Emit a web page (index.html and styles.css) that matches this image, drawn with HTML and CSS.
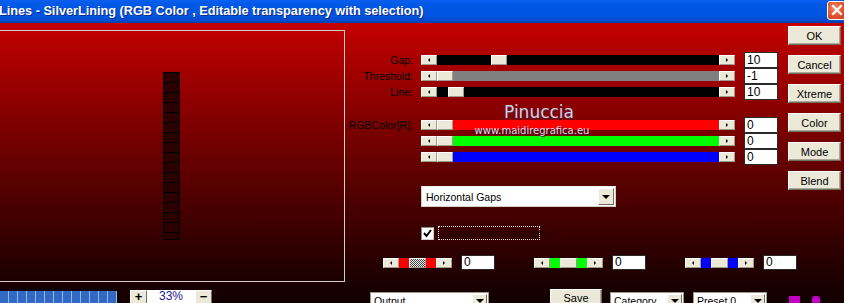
FILE: index.html
```html
<!DOCTYPE html>
<html lang="en">
<head>
    <meta charset="UTF-8">
    <title>Lines - SilverLining</title>
    <link rel="stylesheet" href="styles.css">
</head>
<body>
<div class="window">
    <div class="titlebar">
        <span class="title">Lines - SilverLining (RGB Color , Editable transparency with selection)</span>
        <span class="close">
            <svg width="12" height="12" viewBox="0 0 12 12"><path d="M2 2 L10 10 M10 2 L2 10" stroke="#fff" stroke-width="2.2" stroke-linecap="square"/></svg>
        </span>
    </div>

    <div class="client">
        <div class="main">
            <div class="preview">
                <div class="ladder"></div>
            </div>

            <div class="controls">
                <div class="row">
                    <span class="lbl">Gap:</span>
                    <div class="slider">
                        <span class="arrow left"></span>
                        <span class="track black"><span class="thumb" style="margin-left: 54px"></span></span>
                        <span class="arrow right"></span>
                    </div>
                    <span class="value">10</span>
                </div>
                <div class="row">
                    <span class="lbl">Threshold:</span>
                    <div class="slider">
                        <span class="arrow left"></span>
                        <span class="track gray"><span class="thumb"></span></span>
                        <span class="arrow right"></span>
                    </div>
                    <span class="value">-1</span>
                </div>
                <div class="row">
                    <span class="lbl">Line:</span>
                    <div class="slider">
                        <span class="arrow left"></span>
                        <span class="track black"><span class="thumb" style="margin-left: 11px"></span></span>
                        <span class="arrow right"></span>
                    </div>
                    <span class="value">10</span>
                </div>

                <div class="rgb">
                    <div class="row">
                        <span class="lbl">RGBColor[R]:</span>
                        <div class="slider">
                            <span class="arrow left"></span>
                            <span class="track red"><span class="thumb"></span></span>
                            <span class="arrow right"></span>
                        </div>
                        <span class="value">0</span>
                    </div>
                    <div class="row">
                        <span class="lbl"></span>
                        <div class="slider">
                            <span class="arrow left"></span>
                            <span class="track green"><span class="thumb"></span></span>
                            <span class="arrow right"></span>
                        </div>
                        <span class="value">0</span>
                    </div>
                    <div class="row">
                        <span class="lbl"></span>
                        <div class="slider">
                            <span class="arrow left"></span>
                            <span class="track blue"><span class="thumb"></span></span>
                            <span class="arrow right"></span>
                        </div>
                        <span class="value">0</span>
                    </div>
                    <div class="watermark">
                        <div class="wm-name">Pinuccia</div>
                        <div class="wm-url">www.maidiregrafica.eu</div>
                    </div>
                </div>

                <div class="combo">
                    <span class="combo-text">Horizontal Gaps</span>
                    <span class="drop"></span>
                </div>

                <div class="check">
                    <span class="box">
                        <svg width="11" height="11" viewBox="0 0 11 11"><path d="M2 5 L4.5 8 L9 2" fill="none" stroke="#000" stroke-width="2"/></svg>
                    </span>
                    <span class="check-label">Create lines, not gaps</span>
                </div>

                <div class="minis">
                    <div class="mini">
                        <span class="arrow left"></span>
                        <span class="chip red"></span>
                        <span class="mthumb dither"></span>
                        <span class="chip red"></span>
                        <span class="arrow right"></span>
                    </div>
                    <span class="value">0</span>
                    <div class="mini">
                        <span class="arrow left"></span>
                        <span class="chip green"></span>
                        <span class="mthumb"></span>
                        <span class="chip green"></span>
                        <span class="arrow right"></span>
                    </div>
                    <span class="value">0</span>
                    <div class="mini">
                        <span class="arrow left"></span>
                        <span class="chip blue"></span>
                        <span class="mthumb"></span>
                        <span class="chip blue"></span>
                        <span class="arrow right"></span>
                    </div>
                    <span class="value">0</span>
                </div>
            </div>

            <div class="buttons">
                <button>OK</button>
                <button>Cancel</button>
                <button>Xtreme</button>
                <button>Color</button>
                <button>Mode</button>
                <button>Blend</button>
            </div>
        </div>

        <div class="footer">
            <div class="progress"></div>
            <span class="zbtn plus">+</span>
            <span class="zoom">33%</span>
            <span class="zbtn">&minus;</span>
            <div class="combo small output"><span class="combo-text">Output</span><span class="drop"></span></div>
            <button class="save">Save</button>
            <div class="combo small category"><span class="combo-text">Category</span><span class="drop"></span></div>
            <div class="combo small preset"><span class="combo-text">Preset 0</span><span class="drop"></span></div>
            <span class="logo"><span class="sq"></span><span class="dot"></span></span>
        </div>
    </div>
</div>
</body>
</html>
```

FILE: styles.css
```css
body {
    margin: 0;
    padding: 0;
    font-family: "Liberation Sans", Arial, sans-serif;
    background-color: #100000;
}

.window {
    width: 844px;
    height: 303px;
    overflow: hidden;
}

/* title bar */
.titlebar {
    height: 23px;
    display: flex;
    align-items: center;
    justify-content: space-between;
    background: linear-gradient(#0a5ff0, #0058e6 20%, #0054e0 70%, #0049c8 92%, #003ca8);
}

.title {
    color: #fff;
    font-weight: bold;
    font-size: 12.7px;
    margin-left: -1px;
    margin-top: -2px;
    text-shadow: 1px 1px 0 #0a2a8a;
    white-space: nowrap;
}

.close {
    width: 19px;
    height: 19px;
    margin-top: -3px;
    margin-right: -2px;
    box-sizing: border-box;
    border: 1px solid #fff;
    border-radius: 3px;
    background: radial-gradient(circle at 40% 35%, #f08a6a, #e0532f 55%, #c83a18);
    display: flex;
    align-items: center;
    justify-content: center;
}

/* client area */
.client {
    height: 280px;
    background: linear-gradient(#c40000, #8a0000 30%, #4a0000 65%, #1e0000 90%, #120000);
}

.main {
    height: 266px;
    display: flex;
}

.preview {
    width: 344px;
    height: 250px;
    margin-top: 7px;
    border: 1px solid #d4d0c8;
    border-left: none;
    flex-shrink: 0;
}

.ladder {
    width: 15px;
    height: 166px;
    margin-left: 163px;
    margin-top: 41px;
    border: 1px solid #000;
    background-color: #2a0000;
    background-image: repeating-linear-gradient(#2a0000 0 9px, #000 9px 10px);
}

/* sliders */
.controls {
    width: 433px;
    padding-top: 29px;
    flex-shrink: 0;
    position: relative;
}

.row {
    display: flex;
    align-items: center;
    height: 16px;
}

.lbl {
    width: 68px;
    margin-right: 8px;
    text-align: right;
    font-size: 10.5px;
    color: #000;
    white-space: nowrap;
}

.slider {
    width: 314px;
    height: 10px;
    display: flex;
    margin-right: 9px;
}

.arrow {
    width: 16px;
    height: 10px;
    box-sizing: border-box;
    background-color: #ece9d8;
    border-top: 1px solid #fff;
    border-left: 1px solid #fff;
    border-right: 1px solid #9d9a8c;
    border-bottom: 1px solid #9d9a8c;
    display: flex;
    align-items: center;
    justify-content: center;
    flex-shrink: 0;
}

.arrow::after {
    content: '';
    width: 0;
    height: 0;
    border-top: 2px solid transparent;
    border-bottom: 2px solid transparent;
}

.arrow.left::after {
    border-right: 2px solid #000;
}

.arrow.right::after {
    border-left: 2px solid #000;
}

.track {
    flex: 1;
    display: flex;
}

.thumb {
    width: 16px;
    height: 10px;
    box-sizing: border-box;
    background-color: #ece9d8;
    border-top: 1px solid #fff;
    border-left: 1px solid #fff;
    border-right: 1px solid #9d9a8c;
    border-bottom: 1px solid #9d9a8c;
}

.black { background-color: #000; }
.gray { background-color: #808080; }
.red { background-color: #ff0000; }
.green { background-color: #00ff00; }
.blue { background-color: #0000ff; }

.value {
    width: 34px;
    height: 16px;
    box-sizing: border-box;
    background-color: #fff;
    border: 1px solid #2a2a2a;
    font-size: 12px;
    line-height: 14px;
    padding-left: 2px;
    color: #000;
    flex-shrink: 0;
}

.rgb {
    margin-top: 17px;
    position: relative;
}

.watermark {
    position: absolute;
    left: 127px;
    top: -14px;
    text-align: center;
    width: 120px;
    pointer-events: none;
}

.wm-name {
    font-family: "DejaVu Sans", Verdana, sans-serif;
    font-size: 17px;
    color: #cfcfe8;
    text-shadow: 1px 1px 0 #5a2030;
    line-height: 19px;
    margin-left: 14px;
}

.wm-url {
    font-family: "DejaVu Sans", Verdana, sans-serif;
    font-size: 10px;
    color: #d8d8ec;
    text-shadow: 1px 1px 0 #3a1020;
    line-height: 12px;
    margin-top: 3px;
    white-space: nowrap;
}

/* dropdown */
.combo {
    width: 195px;
    height: 21px;
    box-sizing: border-box;
    margin-top: 21px;
    margin-left: 76px;
    background-color: #fff;
    border: 1px solid #d4d0c8;
    border-top-color: #f0f0f0;
    display: flex;
    align-items: center;
    justify-content: space-between;
    padding: 0 1px 0 4px;
}

.combo-text {
    font-size: 10.5px;
    color: #000;
    white-space: nowrap;
}

.drop {
    width: 16px;
    height: 17px;
    box-sizing: border-box;
    background-color: #ece9d8;
    border-top: 1px solid #fff;
    border-left: 1px solid #fff;
    border-right: 1px solid #716f64;
    border-bottom: 1px solid #716f64;
    display: flex;
    align-items: center;
    justify-content: center;
}

.drop::after {
    content: '';
    border-left: 4px solid transparent;
    border-right: 4px solid transparent;
    border-top: 4px solid #000;
}

/* checkbox */
.check {
    display: flex;
    align-items: center;
    margin-top: 19px;
    margin-left: 76px;
    height: 14px;
}

.box {
    width: 13px;
    height: 13px;
    box-sizing: border-box;
    background-color: #fff;
    border: 1px solid #8a8a8a;
    border-right-color: #d4d0c8;
    border-bottom-color: #d4d0c8;
    display: flex;
    align-items: center;
    justify-content: center;
    margin-right: 4px;
}

.check-label {
    font-size: 11px;
    color: #220000;
    border: 1px dotted #e8e8e8;
    padding: 0 2px;
    height: 14px;
    line-height: 13px;
    box-sizing: border-box;
    width: 102px;
    white-space: nowrap;
}

/* small colour sliders */
.minis {
    display: flex;
    align-items: center;
    margin-top: 15px;
    margin-left: 38px;
    height: 15px;
    width: 420px;
}

.mini {
    display: flex;
    height: 10px;
    margin-right: 9px;
    flex-shrink: 0;
}

.minis .value {
    margin-right: 39px;
    height: 15px;
    line-height: 13px;
}

.chip {
    width: 10px;
    height: 10px;
}

.mthumb {
    width: 17px;
    height: 10px;
    box-sizing: border-box;
    background-color: #ece9d8;
    border-top: 1px solid #fff;
    border-left: 1px solid #fff;
    border-right: 1px solid #9d9a8c;
    border-bottom: 1px solid #9d9a8c;
}

.mthumb.dither {
    background-image: repeating-conic-gradient(#444 0 25%, #eee 0 50%);
    background-size: 2px 2px;
}

/* right-hand buttons */
.buttons {
    margin-left: 10px;
    margin-top: 3px;
    display: flex;
    flex-direction: column;
    gap: 10px;
}

button {
    width: 53px;
    height: 19px;
    padding: 0;
    font-family: "Liberation Sans", Arial, sans-serif;
    font-size: 11px;
    color: #000;
    background-color: #ece9d8;
    border: 1px solid #fff;
    border-right-color: #716f64;
    border-bottom-color: #716f64;
    box-shadow: inset -1px -1px 0 #aca899;
}

/* footer */
.footer {
    display: flex;
    align-items: flex-start;
    margin-top: 0;
    height: 14px;
}

.progress {
    width: 117px;
    height: 12px;
    margin-top: 2px;
    background-image: repeating-linear-gradient(90deg, #316ac5 0 8px, #9bb6e2 8px 9px);
}

.zbtn {
    width: 17px;
    height: 14px;
    box-sizing: border-box;
    margin-top: 1px;
    background-color: #ece9d8;
    border: 1px solid #fff;
    border-right-color: #716f64;
    font-size: 13px;
    font-weight: bold;
    line-height: 12px;
    text-align: center;
    color: #000;
}

.zbtn.plus {
    margin-left: 13px;
}

.zoom {
    width: 48px;
    height: 14px;
    margin-top: 1px;
    background-color: #fff;
    color: #1a1a8c;
    font-size: 12px;
    text-align: center;
    line-height: 13px;
}

.combo.small {
    height: 18px;
    margin-top: 3px;
    padding-left: 3px;
    border: 1px solid #9d9a8c;
}

.combo.small .drop {
    height: 15px;
    width: 15px;
}

.output {
    width: 119px;
    margin-left: 158px;
}

.save {
    margin-left: 61px;
    margin-top: 0;
    width: 52px;
    height: 18px;
}

.category {
    width: 74px;
    margin-left: 8px;
}

.preset {
    width: 74px;
    margin-left: 9px;
}

.logo {
    display: flex;
    margin-left: 22px;
    margin-top: 7px;
}

.logo .sq {
    width: 11px;
    height: 8px;
    background-color: #c400c4;
}

.logo .dot {
    width: 8px;
    height: 8px;
    margin-left: 12px;
    border-radius: 3px 3px 0 0;
    background-color: #c400c4;
}
```
